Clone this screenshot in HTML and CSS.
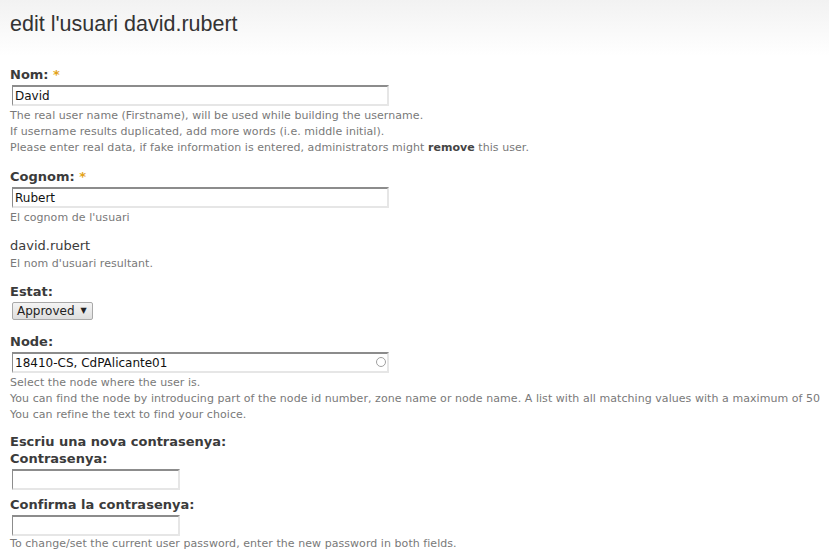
FILE: index.html
```html
<!DOCTYPE html>
<html lang="ca">
<head>
  <meta charset="UTF-8"/>
  <title>edit l'usuari david.rubert</title>
  <link rel="stylesheet" href="styles.css">
</head>
<body>
<header class="page-head"><h1>edit l'usuari david.rubert</h1></header>

<form class="user-form">
  <div class="form-item">
    <label for="edit-nom">Nom: <span class="req">*</span></label>
    <input type="text" id="edit-nom" class="form-text" value="David"/>
    <div class="description">
      The real user name (Firstname), will be used while building the username.<br/>
      If username results duplicated, add more words (i.e. middle initial).<br/>
      Please enter real data, if fake information is entered, administrators might <strong>remove</strong> this user.
    </div>
  </div>

  <div class="form-item">
    <label for="edit-cognom">Cognom: <span class="req">*</span></label>
    <input type="text" id="edit-cognom" class="form-text" value="Rubert"/>
    <div class="description">El cognom de l'usuari</div>
  </div>

  <div class="form-item">
    <div class="markup">david.rubert</div>
    <div class="description">El nom d'usuari resultant.</div>
  </div>

  <div class="form-item">
    <label for="edit-estat">Estat:</label>
    <div class="select-box" id="edit-estat">Approved <span class="arrow">▼</span></div>
  </div>

  <div class="form-item">
    <label for="edit-node">Node:</label>
    <div class="auto-wrap">
      <input type="text" id="edit-node" class="form-text" value="18410-CS, CdPAlicante01"/>
      <span class="throbber"></span>
    </div>
    <div class="description nowrap">
      Select the node where the user is.<br/>
      You can find the node by introducing part of the node id number, zone name or node name. A list with all matching values with a maximum of 50<br/>
      You can refine the text to find your choice.
    </div>
  </div>

  <div class="form-item pass-group">
    <div class="group-title">Escriu una nova contrasenya:</div>
    <label for="edit-pass1">Contrasenya:</label>
    <input type="password" id="edit-pass1" class="form-text short"/>
    <label for="edit-pass2" class="second">Confirma la contrasenya:</label>
    <input type="password" id="edit-pass2" class="form-text short"/>
    <div class="description">To change/set the current user password, enter the new password in both fields.</div>
  </div>
</form>
</body>
</html>
```

FILE: styles.css
```css
html,body{overflow:hidden}
body{margin:0;background:#fff;color:#3b3b3b;font-family:"DejaVu Sans",Verdana,sans-serif;font-size:13px}
.page-head{height:56px;background:linear-gradient(#f2f2f2,#fff);padding:0 10px}
.page-head h1{margin:0;padding-top:11px;font-family:"Liberation Sans",Arial,sans-serif;font-weight:normal;font-size:21.5px;line-height:26px;color:#333}
.user-form{padding:10px 10px 0}
.form-item{margin-bottom:11px}
.form-item:first-child{margin-bottom:12px}
label,.group-title{display:block;font-weight:bold;line-height:17px;margin-bottom:2px}
.req{color:#e3a319}
.form-text{display:block;box-sizing:border-box;width:377px;height:21px;margin:0 0 0 2px;padding:1px 2px;border:1px solid;border-width:2px 2px 2px 1px;border-color:#8c8c8c #e6e6e6 #e6e6e6 #8c8c8c;font-family:"DejaVu Sans",sans-serif;font-size:12px;color:#111;background:#fff;outline:none}
.form-text.short{width:168px}
.description{font-size:11px;line-height:16px;letter-spacing:.055px;color:#797979;margin-top:2px}
.description strong{color:#444}
.nowrap{white-space:nowrap}
.markup{line-height:17px;margin-bottom:0}
.select-box{display:inline-block;margin:0 0 2px 2px;padding:0 5px 0 4px;height:16px;line-height:16px;border:1px solid #a9a9a9;border-radius:2px;background:linear-gradient(#f4f4f4,#dedede);font-size:12px;color:#222}
.select-box .arrow{font-size:8px;vertical-align:2px;margin-left:2px}
.auto-wrap{position:relative;width:379px}
.throbber{position:absolute;right:3px;top:5px;width:8px;height:8px;border:1.5px solid #a0a0a0;border-radius:50%}
.pass-group .group-title{line-height:16px;margin-bottom:0}
.pass-group .second{margin-top:6px}
.pass-group .description{margin-top:0}
```
